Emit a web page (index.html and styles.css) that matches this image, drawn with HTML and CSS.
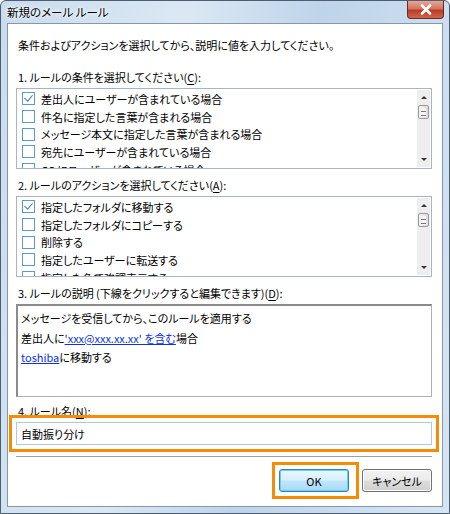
FILE: index.html
```html
<!doctype html>
<html>
<head>
    <meta charset="utf-8">
    <link rel="stylesheet" href="styles.css">
</head>
<body>

<div class='window'>
    <div class='titlebar'>
        <span class='title'>新規のメール ルール</span>
        <span class='close'>
            <svg width='14' height='11' viewBox='0 0 14 11'>
                <path d='M3 1.5 L11 9.5 M11 1.5 L3 9.5' stroke='#fff' stroke-width='2.6' stroke-linecap='round'/>
            </svg>
        </span>
    </div>

    <div class='client'>
        <p class='intro'>条件およびアクションを選択してから、説明に値を入力してください。</p>

        <label class='caption'>1. ルールの条件を選択してください(<u>C</u>):</label>
        <div class='listbox'>
            <ul>
                <li><span class='check on'></span>差出人にユーザーが含まれている場合</li>
                <li><span class='check'></span>件名に指定した言葉が含まれる場合</li>
                <li><span class='check'></span>メッセージ本文に指定した言葉が含まれる場合</li>
                <li><span class='check'></span>宛先にユーザーが含まれている場合</li>
                <li><span class='check'></span>CC にユーザーが含まれている場合</li>
            </ul>
            <div class='scrollbar'>
                <span class='arrow up'></span>
                <span class='thumb'></span>
                <span class='arrow down'></span>
            </div>
        </div>

        <label class='caption'>2. ルールのアクションを選択してください(<u>A</u>):</label>
        <div class='listbox'>
            <ul>
                <li><span class='check on'></span>指定したフォルダに移動する</li>
                <li><span class='check'></span>指定したフォルダにコピーする</li>
                <li><span class='check'></span>削除する</li>
                <li><span class='check'></span>指定したユーザーに転送する</li>
                <li><span class='check'></span>指定した色で強調表示する</li>
            </ul>
            <div class='scrollbar'>
                <span class='arrow up'></span>
                <span class='thumb'></span>
                <span class='arrow down'></span>
            </div>
        </div>

        <label class='caption'>3. ルールの説明 (下線をクリックすると編集できます)(<u>D</u>):</label>
        <div class='description'>
            <div>メッセージを受信してから、このルールを適用する</div>
            <div>差出人に<a href='#'>'xxx@xxx.xx.xx' を含む</a>場合</div>
            <div><a href='#'>toshiba</a>に移動する</div>
        </div>

        <label class='caption tight'>4. ルール名(<u>N</u>):</label>
        <input class='rulename marked' value='自動振り分け'>

        <div class='separator'></div>

        <div class='buttons'>
            <span class='marked ok'><button class='default'>OK</button></span>
            <button>キャンセル</button>
        </div>
    </div>
</div>

</body>
</html>
```

FILE: styles.css
```css
body {
    margin: 0;
    font-family: "Noto Sans CJK JP", sans-serif;
    font-size: 11px;
    font-feature-settings: "palt";
    color: #000;
}

.window {
    width: 450px;
    height: 514px;
    box-sizing: border-box;
    border: 1px solid #4d5e72;
    border-radius: 6px 6px 0 0;
    background: linear-gradient(100deg, #c9dcee 0%, #dbe8f4 35%, #bed4ea 60%, #d6e5f3 100%);
    display: flex;
    flex-direction: column;
}

.titlebar {
    height: 22px;
    flex-shrink: 0;
    display: flex;
    justify-content: space-between;
    align-items: flex-start;
    padding-left: 6px;
}

.title {
    margin-top: 3px;
    font-size: 11.5px;
    text-shadow: 0 0 6px #fff, 0 0 3px #fff;
}

.close {
    width: 35px;
    height: 17px;
    margin-right: 5px;
    display: flex;
    align-items: center;
    justify-content: center;
    border: 1px solid #6b2a20;
    border-top: none;
    border-radius: 0 0 4px 4px;
    background: linear-gradient(#e8a797 0%, #d7735f 45%, #b73c25 55%, #d2664c 100%);
}

.client {
    flex: 1;
    margin: 0 6px 6px 6px;
    border: 1px solid #8397ad;
    background: #fff;
    padding: 12px 10px 0 8px;
    display: flex;
    flex-direction: column;
}

.client > * {
    flex-shrink: 0;
}

.intro {
    margin: 0 0 14px 2px;
    line-height: 18px;
}

.caption {
    margin-left: 2px;
    line-height: 18px;
    margin-bottom: 2px;
}

.caption.tight {
    margin-bottom: 2px;
}

.caption u {
    text-decoration-thickness: 1px;
    text-underline-offset: 2px;
}

.listbox {
    height: 79px;
    border: 1px solid #a9b3c2;
    display: flex;
    overflow: hidden;
    margin-bottom: 7px;
}

.listbox ul {
    flex: 1;
    margin: 0;
    padding: 1px 0 0 5px;
    list-style: none;
}

.listbox li {
    height: 17.7px;
    display: flex;
    align-items: center;
    white-space: nowrap;
}

.check {
    width: 11px;
    height: 11px;
    border: 1px solid #5b9ad8;
    margin-right: 6px;
    position: relative;
    background: #fff;
}

.check.on::after {
    content: '';
    position: absolute;
    left: 3px;
    top: 0px;
    width: 4px;
    height: 7px;
    border: solid #3a7cc8;
    border-width: 0 1.5px 1.5px 0;
    transform: rotate(40deg);
}

.scrollbar {
    width: 13px;
    margin: 1px;
    background: #eeeeee;
    display: flex;
    flex-direction: column;
    align-items: center;
}

.arrow {
    width: 0;
    height: 0;
    border-left: 3px solid transparent;
    border-right: 3px solid transparent;
}

.arrow.up {
    margin-top: 6px;
    border-bottom: 3px solid #333;
}

.arrow.down {
    margin-top: auto;
    margin-bottom: 6px;
    border-top: 3px solid #333;
}

.thumb {
    width: 9px;
    height: 12px;
    margin-top: 6px;
    border: 1px solid #9a9a9a;
    border-radius: 2px;
    background: repeating-linear-gradient(#f6f6f6 0 3px, #777 3px 4px) center / 5px 9px no-repeat,
                linear-gradient(90deg, #f4f4f4, #dcdcdc);
}

.description {
    height: 87px;
    border: 2px solid #8b8b8b;
    border-right-width: 1px;
    border-bottom-width: 1px;
    border-right-color: #b0b0b0;
    border-bottom-color: #b0b0b0;
    padding: 3px 3px 0 3px;
    margin-bottom: 5px;
    line-height: 19.5px;
}

.description a {
    color: #0b33e8;
    text-decoration-thickness: 1px;
}

.rulename {
    font: inherit;
    height: 23px;
    box-sizing: border-box;
    border: 1px solid #a9cbe3;
    padding: 0 4px;
}

.marked {
    display: flex;
    outline: 3px solid #f68b05;
    outline-offset: 4px;
}

/* the OK frame sits a little wider on its right side */
.marked.ok {
    padding-right: 3px;
    margin-right: -3px;
}

.separator {
    height: 1px;
    margin-top: 11px;
    background: #a0a0a0;
    border-bottom: 1px solid #fff;
}

.buttons {
    display: flex;
    justify-content: flex-end;
    gap: 13px;
    margin-top: 11px;
}

button {
    font: inherit;
    width: 70px;
    height: 23px;
    border: 1px solid #707070;
    border-radius: 3px;
    background: linear-gradient(#f2f2f2 0%, #ebebeb 48%, #dddddd 52%, #cfcfcf 100%);
    box-shadow: inset 0 0 0 1px #fcfcfc;
}

button.default {
    border-color: #3c7fb1;
    background: linear-gradient(#eaf6fd 0%, #d9f0fc 48%, #bee6fd 52%, #a7d9f5 100%);
    box-shadow: inset 0 0 0 1px #5ed2fe;
}
```
